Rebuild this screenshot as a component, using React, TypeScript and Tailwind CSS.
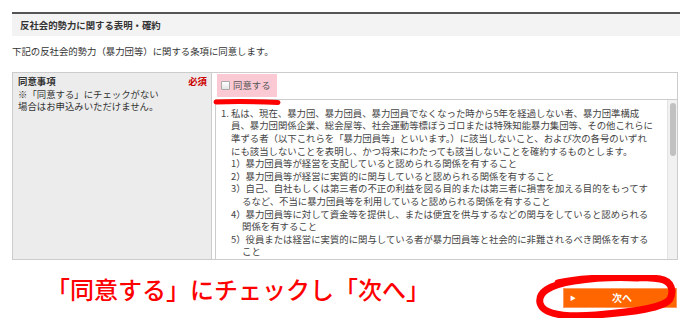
import React from "react";

const terms: { text: string; indent: string }[] = [
  { text: "1. 私は、現在、暴力団、暴力団員、暴力団員でなくなった時から5年を経過しない者、暴力団準構成", indent: "pl-0" },
  { text: "員、暴力団関係企業、総会屋等、社会運動等標ぼうゴロまたは特殊知能暴力集団等、その他これらに", indent: "pl-[10px]" },
  { text: "準ずる者（以下これらを「暴力団員等」といいます。）に該当しないこと、および次の各号のいずれ", indent: "pl-[10px]" },
  { text: "にも該当しないことを表明し、かつ将来にわたっても該当しないことを確約するものとします。", indent: "pl-[10px]" },
  { text: "1）暴力団員等が経営を支配していると認められる関係を有すること", indent: "pl-[10px]" },
  { text: "2）暴力団員等が経営に実質的に関与していると認められる関係を有すること", indent: "pl-[10px]" },
  { text: "3）自己、自社もしくは第三者の不正の利益を図る目的または第三者に損害を加える目的をもってす", indent: "pl-[10px]" },
  { text: "るなど、不当に暴力団員等を利用していると認められる関係を有すること", indent: "pl-[21px]" },
  { text: "4）暴力団員等に対して資金等を提供し、または便宜を供与するなどの関与をしていると認められる", indent: "pl-[10px]" },
  { text: "関係を有すること", indent: "pl-[21px]" },
  { text: "5）役員または経営に実質的に関与している者が暴力団員等と社会的に非難されるべき関係を有する", indent: "pl-[10px]" },
  { text: "こと", indent: "pl-[21px]" },
];

export default function App() {
  return (
    <div
      className="w-[680px] h-[318px] overflow-hidden bg-white text-[#333] text-[9.4px]"
      style={{ fontFamily: '"Noto Sans CJK JP", "Noto Sans", sans-serif' }}
    >
      <div className="pt-[12px] pl-[12px]">
        {/* Section heading */}
        <div className="h-[24px] border-t-2 border-[#555] bg-[#f3f3f3] flex items-center pl-[8px] font-bold">
          反社会的勢力に関する表明・確約
        </div>

        <p className="mt-[9px] leading-[12.8px]">
          下記の反社会的勢力（暴力団等）に関する条項に同意します。
        </p>

        {/* Agreement table */}
        <div className="mt-[14px] mr-[2px] h-[188px] border border-[#ccc] flex">
          <div className="w-[199px] shrink-0 bg-[#ececec] border-r border-[#ccc] pl-[5px] pr-[4px] pt-[2px] leading-[12.8px]">
            <div className="flex justify-between">
              <span className="font-bold">同意事項</span>
              <span className="font-bold text-[#cc0000]">必須</span>
            </div>
            <div>※「同意する」にチェックがない</div>
            <div>場合はお申込みいただけません。</div>
          </div>

          <div className="relative flex-1 flex flex-col overflow-hidden">
            <label className="mt-[1px] ml-[5px] w-[60px] h-[23px] bg-[#fbc9d4] flex items-center gap-[3px] pl-[4px] text-[#555]">
              <span className="w-[9px] h-[9px] border border-[#aaa] rounded-[1px] bg-gradient-to-b from-white to-[#e4e4e4]" />
              <span>同意する</span>
            </label>
            <svg className="absolute left-[1px] top-[25px]" width="68" height="8" viewBox="0 0 68 8">
              <path d="M3 4 Q 30 3 65 4.5" stroke="#ff0000" strokeWidth="5" strokeLinecap="round" fill="none" />
            </svg>

            <div className="mt-[2px] ml-[3px] flex-1 flex border-t border-l border-[#ccc] overflow-hidden">
              <div className="flex-1 pl-[5px] pt-[7px] leading-[12.6px] text-[#444]">
                {terms.map((t, i) => (
                  <div key={i} className={`whitespace-nowrap ${t.indent}`}>
                    {t.text}
                  </div>
                ))}
              </div>
              <div className="w-[10px] shrink-0 bg-[#f1f1f1] border-l border-[#e3e3e3] pt-[3px]">
                <div className="mx-[1.5px] h-[53px] rounded-full bg-[#c1c1c1]" />
              </div>
            </div>
          </div>
        </div>
      </div>

      {/* Instruction + next button */}
      <div className="flex justify-between items-start pl-[46px] pr-[3px]">
        <p className="mt-[16px] text-[24px] leading-[26px] font-medium text-[#f00] whitespace-nowrap">
          「同意する」にチェックし「次へ」
        </p>
        <div className="relative mt-[28px]">
          <button className="w-[114px] h-[20px] bg-[#ff6600] border border-[#ff9a5c] flex items-center pl-[6px] text-white">
            <span className="text-[6px]">▶</span>
            <span className="flex-1 text-center font-bold text-[10px] pr-[8px]">次へ</span>
          </button>
          <svg
            className="absolute left-[-27px] top-[-13px] pointer-events-none"
            width="142"
            height="46"
            viewBox="0 0 142 46"
          >
            <path
              d="M22 8 C 45 2, 105 1, 124 4 C 136 6, 138 16, 134 24 C 128 33, 98 37, 60 40 C 30 42, 7 40, 4 28 C 2 18, 12 10, 38 6 C 58 3, 82 2, 102 3"
              stroke="#ff0000"
              strokeWidth="7"
              strokeLinecap="round"
              fill="none"
            />
          </svg>
        </div>
      </div>
    </div>
  );
}
